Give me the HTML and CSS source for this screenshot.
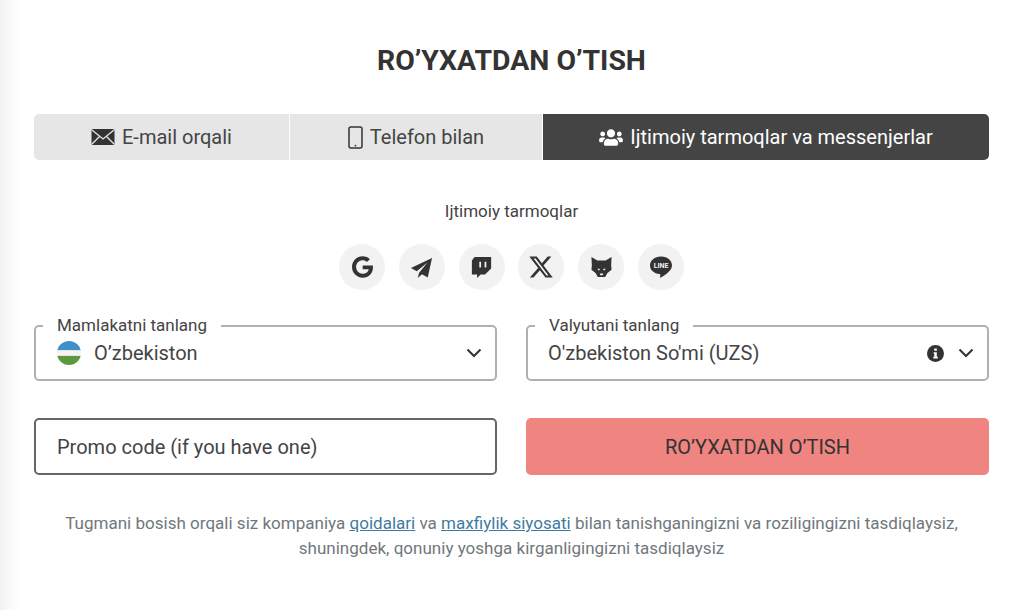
FILE: index.html
```html
<!DOCTYPE html>
<html lang="en">

<head>
    <meta charset="UTF-8">
    <meta name="viewport" content="width=device-width, initial-scale=1.0">
    <title>Ro'yxatdan o'tish</title>
    <link rel="stylesheet" href="styles.css">
</head>

<body>
    <div class="register">
        <h1 class="register-title">RO’YXATDAN O’TISH</h1>

        <div class="tabs">
            <button class="tab tab-email">
                <svg class="tab-icon" width="24" height="18" viewBox="0 0 24 18">
                    <rect x="0.5" y="1" width="23" height="16" rx="1.5" fill="#333" />
                    <path d="M1 2l11 9 11-9M1 16l8-8M23 16l-8-8" fill="none" stroke="#e6e6e6" stroke-width="1.3" />
                </svg>
                E-mail orqali
            </button>
            <button class="tab tab-phone">
                <svg class="tab-icon" width="15" height="23" viewBox="0 0 15 23">
                    <rect x="1" y="1" width="13" height="21" rx="2" fill="none" stroke="#333" stroke-width="1.5" />
                    <circle cx="7.500" cy="19.600" r="0.900" fill="#333" />
                </svg>
                Telefon bilan
            </button>
            <button class="tab tab-social active">
                <svg class="tab-icon" width="24" height="19" viewBox="0 0 640 512" fill="#fff">
                    <path d="M96 224c35.3 0 64-28.7 64-64s-28.7-64-64-64-64 28.7-64 64 28.7 64 64 64zm448 0c35.3 0 64-28.7 64-64s-28.7-64-64-64-64 28.7-64 64 28.7 64 64 64zm32 32h-64c-17.6 0-33.5 7.1-45.1 18.6 40.3 22.1 68.9 62 75.1 109.4h66c17.7 0 32-14.3 32-32v-32c0-35.3-28.7-64-64-64zm-256 0c61.9 0 112-50.1 112-112S381.9 32 320 32 208 82.1 208 144s50.1 112 112 112zm76.8 32h-8.3c-20.8 10-43.9 16-68.5 16s-47.6-6-68.5-16h-8.3C179.6 288 128 339.6 128 403.2V432c0 26.5 21.5 48 48 48h288c26.5 0 48-21.5 48-48v-28.8c0-63.6-51.6-115.2-115.2-115.2zm-223.7-13.4C161.5 263.1 145.6 256 128 256H64c-35.3 0-64 28.7-64 64v32c0 17.7 14.3 32 32 32h65.9c6.3-47.4 34.9-87.3 75.2-109.4z" />
                </svg>
                Ijtimoiy tarmoqlar va messenjerlar
            </button>
        </div>

        <p class="social-label">Ijtimoiy tarmoqlar</p>

        <div class="social-list">
            <a href="#" class="social-btn">
                <svg width="21" height="22" viewBox="0 0 488 512" fill="#333">
                    <path d="M488 261.8C488 403.3 391.1 504 248 504 110.8 504 0 393.2 0 256S110.8 8 248 8c66.8 0 123 24.5 166.3 64.9l-67.5 64.9C258.5 52.6 94.3 116.6 94.3 256c0 86.5 69.1 156.6 153.7 156.6 98.2 0 135-70.4 140.8-106.9H248v-85.3h236.1c2.3 12.7 3.9 24.9 3.9 41.4z" />
                </svg>
            </a>
            <a href="#" class="social-btn">
                <svg width="23" height="23" viewBox="0 0 24 24" fill="#333">
                    <path d="M23 2 1 12.5l6 3.5L18 7l-8.5 10.5L8 23l4.5-4 6 3.5z" />
                </svg>
            </a>
            <a href="#" class="social-btn">
                <svg width="21" height="23" viewBox="0 0 24 24">
                    <path d="M4 0 1 4v16h6v4l4-4h5l7-7V0z" fill="#333" />
                    <path d="M9.5 5.5h2v6.500h-2zM15.500 5.500h2v6.500h-2z" fill="#f2f2f2" />
                </svg>
            </a>
            <a href="#" class="social-btn">
                <svg width="26" height="26" viewBox="0 0 24 24" fill="#333">
                    <path d="M18.244 2.25h3.308l-7.227 8.26 8.502 11.24H16.17l-5.214-6.817L4.99 21.75H1.68l7.73-8.835L1.254 2.25H8.08l4.713 6.231zm-1.161 17.52h1.833L7.084 4.126H5.117z" />
                </svg>
            </a>
            <a href="#" class="social-btn">
                <svg width="23" height="22" viewBox="0 0 24 24">
                    <path d="M1 1l6.500 4h9L23 1l-.5 9 .5 5-4.500 3.500L16 23H8l-2.500-4.500L1 15l.5-5z" fill="#333" />
                    <path d="M7.500 14h2.500v1.500H8.500zM16.500 14H14v1.500h1.500zM10 19h4l-.8 2h-2.400z" fill="#f2f2f2" />
                </svg>
            </a>
            <a href="#" class="social-btn">
                <svg width="24" height="24" viewBox="0 0 24 24">
                    <path d="M12 1.500C5.400 1.500 1 5.500 1 10.500c0 4.700 4.100 8 9.500 8.600.7.100 1 .5.800 1.200l-.3 1.900c-.1.500.3.700.8.400 3-1.700 11.200-6.500 11.200-12.100 0-5-4.400-9-10.800-9z" fill="#333" />
                    <text x="12" y="13.200" class="line-text">LINE</text>
                </svg>
            </a>
        </div>

        <div class="form-row select-row">
            <fieldset class="field">
                <legend class="field-label">Mamlakatni tanlang</legend>
                <div class="field-value">
                    <span class="flag"></span>
                    <span class="country-name">O’zbekiston</span>
                    <svg class="chevron" width="16" height="10" viewBox="0 0 16 10">
                        <path d="M1.500 1.500 8 8l6.500-6.500" fill="none" stroke="#333" stroke-width="2" />
                    </svg>
                </div>
            </fieldset>
            <fieldset class="field">
                <legend class="field-label">Valyutani tanlang</legend>
                <div class="field-value">
                    <span>O'zbekiston So'mi (UZS)</span>
                    <svg class="info" width="17" height="17" viewBox="0 0 17 17">
                        <circle cx="8.500" cy="8.500" r="8.500" fill="#333" />
                        <path d="M7.200 3.500h2.600v2.300H7.200zM6.700 7.300h3.100v4.400h1v1.700H6.300v-1.700h1V9H6.700z" fill="#fff" />
                    </svg>
                    <svg class="chevron" width="16" height="10" viewBox="0 0 16 10">
                        <path d="M1.500 1.500 8 8l6.500-6.500" fill="none" stroke="#333" stroke-width="2" />
                    </svg>
                </div>
            </fieldset>
        </div>

        <div class="form-row promo-row">
            <input class="promo-input" type="text" placeholder="Promo code (if you have one)">
            <button class="submit-btn">RO’YXATDAN O’TISH</button>
        </div>

        <p class="terms">
            Tugmani bosish orqali siz kompaniya <a href="#">qoidalari</a> va <a href="#">maxfiylik siyosati</a> bilan tanishganingizni va roziligingizni tasdiqlaysiz,<br>
            shuningdek, qonuniy yoshga kirganligingizni tasdiqlaysiz
        </p>
    </div>
</body>

</html>
```

FILE: styles.css
```css
/* Reset and base styles */
* {
    margin: 0;
    padding: 0;
    box-sizing: border-box;
    font-family: Roboto, 'Liberation Sans', sans-serif;
}

body {
    background-color: white;
    color: #333;
}

/* Page container, soft shadow on the left edge */
.register {
    height: 610px;
    padding: 45px 35px 0 34px;
    overflow: hidden;
    background: linear-gradient(to right, #f1f1f1 0, #fafafa 10px, white 20px);
}

.register-title {
    font-size: 28.4px;
    line-height: 32px;
    font-weight: 700;
    text-align: center;
    color: #333;
}

/* Tabs */
.tabs {
    display: grid;
    grid-template-columns: 255px 252px 1fr;
    gap: 1px;
    margin-top: 37px;
    height: 46px;
}

.tab {
    display: flex;
    align-items: center;
    justify-content: center;
    gap: 7px;
    border: none;
    background-color: #e6e6e6;
    color: #444;
    font-size: 20px;
    cursor: pointer;
}

.tab-email {
    border-radius: 5px 0 0 5px;
}

.tab.active {
    background-color: #444;
    color: white;
    border-radius: 0 5px 5px 0;
}

/* Social buttons */
.social-label {
    margin-top: 41px;
    font-size: 17px;
    line-height: 20px;
    text-align: center;
    color: #444;
}

.social-list {
    display: flex;
    justify-content: center;
    gap: 13.8px;
    margin-top: 23px;
}

.social-btn {
    display: flex;
    align-items: center;
    justify-content: center;
    width: 46px;
    height: 46px;
    border-radius: 50%;
    background-color: #f2f2f2;
}

.line-text {
    font-size: 7px;
    font-weight: 700;
    fill: #f2f2f2;
    text-anchor: middle;
}

/* Form */
.form-row {
    display: grid;
    grid-template-columns: 463px 463px;
    gap: 29px;
}

.select-row {
    margin-top: 26px;
}

.field {
    height: 65px;
    border: 2px solid #b0b0b0;
    border-radius: 5px;
}

.field-label {
    margin-left: 7px;
    padding: 0 14px 2px;
    font-size: 17px;
    line-height: 18px;
    color: #444;
}

.field-value {
    display: flex;
    align-items: center;
    height: 34px;
    padding: 0 13px 0 20px;
    font-size: 20px;
    color: #444;
}

.flag {
    width: 24px;
    height: 24px;
    margin-left: 1px;
    margin-right: 13px;
    border-radius: 50%;
    background: linear-gradient(to bottom, #3f8fc8 0, #3f8fc8 36%, #b04a4a 36%, #f4f4f4 40%, #f4f4f4 60%, #b04a4a 64%, #5b9a3c 64%, #5b9a3c 100%);
}

.info {
    margin-left: auto;
    margin-right: 14px;
}

.country-name + .chevron {
    margin-left: auto;
}

/* Promo and submit */
.promo-row {
    margin-top: 37px;
}

.promo-input {
    height: 57px;
    padding: 0 21px;
    border: 2px solid #666;
    border-radius: 5px;
    font-size: 20px;
    outline: none;
}

.promo-input::placeholder {
    color: #444;
    opacity: 1;
}

.submit-btn {
    height: 57px;
    border: none;
    border-radius: 5px;
    background-color: #f08480;
    color: #333;
    font-size: 20px;
    cursor: pointer;
}

/* Terms */
.terms {
    margin-top: 36px;
    font-size: 17.05px;
    line-height: 25px;
    text-align: center;
    color: #70777c;
}

.terms a {
    color: #3f7ba0;
}
```
